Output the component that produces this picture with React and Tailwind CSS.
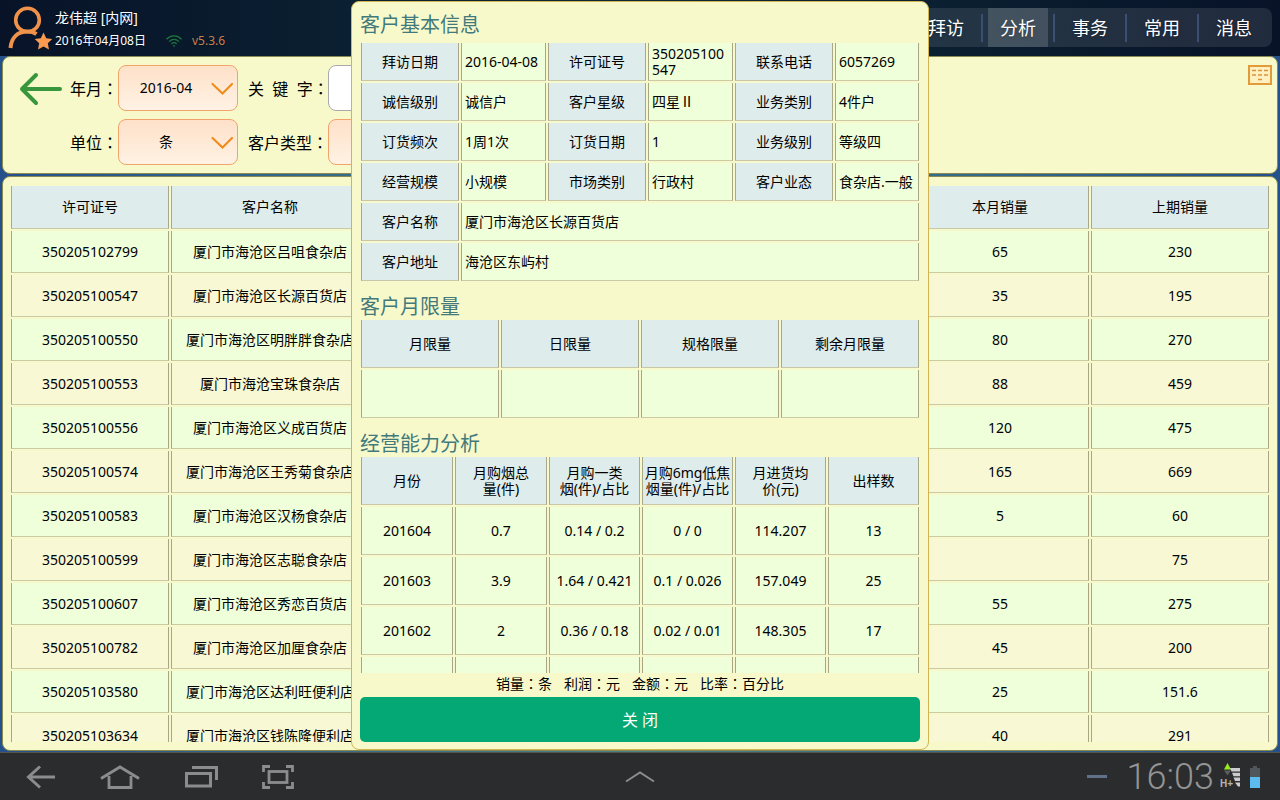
import { useState } from 'react';

const navItems = ['拜访', '分析', '事务', '常用', '消息'];

const customers = [
  { id: '350205102799', name: '厦门市海沧区吕咀食杂店', current: '65', last: '230' },
  { id: '350205100547', name: '厦门市海沧区长源百货店', current: '35', last: '195' },
  { id: '350205100550', name: '厦门市海沧区明胖胖食杂店', current: '80', last: '270' },
  { id: '350205100553', name: '厦门市海沧宝珠食杂店', current: '88', last: '459' },
  { id: '350205100556', name: '厦门市海沧区义成百货店', current: '120', last: '475' },
  { id: '350205100574', name: '厦门市海沧区王秀菊食杂店', current: '165', last: '669' },
  { id: '350205100583', name: '厦门市海沧区汉杨食杂店', current: '5', last: '60' },
  { id: '350205100599', name: '厦门市海沧区志聪食杂店', current: '', last: '75' },
  { id: '350205100607', name: '厦门市海沧区秀恋百货店', current: '55', last: '275' },
  { id: '350205100782', name: '厦门市海沧区加厘食杂店', current: '45', last: '200' },
  { id: '350205103580', name: '厦门市海沧区达利旺便利店', current: '25', last: '151.6' },
  { id: '350205103634', name: '厦门市海沧区钱陈隆便利店', current: '40', last: '291' },
];

const basicInfo = [
  ['拜访日期', '2016-04-08', '许可证号', '350205100547', '联系电话', '6057269'],
  ['诚信级别', '诚信户', '客户星级', '四星Ⅱ', '业务类别', '4件户'],
  ['订货频次', '1周1次', '订货日期', '1', '业务级别', '等级四'],
  ['经营规模', '小规模', '市场类别', '行政村', '客户业态', '食杂店.一般'],
];

const wideInfo = [
  ['客户名称', '厦门市海沧区长源百货店'],
  ['客户地址', '海沧区东屿村'],
];

const limitHeads = ['月限量', '日限量', '规格限量', '剩余月限量'];

const abilityHeads = ['月份', '月购烟总\n量(件)', '月购一类\n烟(件)/占比', '月购6mg低焦\n烟量(件)/占比', '月进货均\n价(元)', '出样数'];

const abilityRows = [
  ['201604', '0.7', '0.14 / 0.2', '0 / 0', '114.207', '13'],
  ['201603', '3.9', '1.64 / 0.421', '0.1 / 0.026', '157.049', '25'],
  ['201602', '2', '0.36 / 0.18', '0.02 / 0.01', '148.305', '17'],
  ['', '', '', '', '', ''],
];

const headCell = 'border-x border-b border-x-[#a8a88c] border-b-[#c8c8a8] bg-[#dfecec] p-0 font-normal';
const bodyCell = 'border-x border-b border-x-[#a8a684] border-b-[#cccaa4] p-0';

// full-width colon, centred in its box
function Colon() {
  return <span className="font-['Noto_Sans_CJK_TC',sans-serif]">：</span>;
}

function UserIcon() {
  return (
    <svg className="h-11 w-11" viewBox="0 0 44 44" fill="none">
      <circle cx="19.5" cy="14" r="11.8" stroke="#f0924a" strokeWidth="3.6" />
      <path d="M2.5 42C3.5 31 10 25.500 19.500 25.500C23 25.500 26 26.300 28.500 28" stroke="#f0924a" strokeWidth="4" />
      <path d="M35.500 26.500l2.700 5.700 6.100.8-4.500 4.300 1.200 6.200-5.500-3-5.500 3 1.200-6.200-4.500-4.300 6.100-.8z" fill="#fb9a50" />
    </svg>
  );
}

function WifiIcon() {
  return (
    <svg className="h-3 w-4" viewBox="0 0 16 12" fill="none" stroke="#1c7a3c" strokeWidth="1.200">
      <path d="M.5 4.200C5-.2 11-.2 15.500 4.200" />
      <path d="M3 6.600c3.200-2.900 6.800-2.900 10 0" />
      <path d="M5.300 8.800c1.800-1.500 3.600-1.500 5.400 0" />
      <circle cx="8" cy="10.800" r=".9" fill="#1c7a3c" stroke="none" />
    </svg>
  );
}

function Dropdown({ id, options }) {
  return (
    <div className="relative h-[46px] w-[120px]">
      <select
        id={id}
        className="h-full w-full appearance-none rounded-lg border border-[#f0a46c] bg-linear-to-b from-[#fee1c9] to-[#fff2e4] pr-6 text-sm text-black [text-align-last:center]"
      >
        {options.map((o) => <option key={o}>{o}</option>)}
      </select>
      <svg className="pointer-events-none absolute right-1 top-4 h-4 w-6" viewBox="0 0 24 16" fill="none">
        <path d="M2.500 3l10 9.500 9.500-9.500" stroke="#f08c1e" strokeWidth="2.200" strokeLinecap="round" />
      </svg>
    </div>
  );
}

function Header() {
  const [active, setActive] = useState('分析');

  return (
    <header className="flex h-14 shrink-0 items-center justify-between bg-linear-to-r from-[#081328] via-[#0c2a38] to-[#081328] px-2 text-white">
      <div className="flex items-center gap-[3px]">
        <UserIcon />
        <div className="pt-[3px] text-shadow-sm">
          <div className="h-[23px] text-sm leading-6">龙伟超 [内网]</div>
          <div className="flex items-center text-xs leading-6">
            <span className="w-[111px]">2016年04月08日</span>
            <WifiIcon />
            <span className="pl-[10px] text-[#c8804a]">v5.3.6</span>
          </div>
        </div>
      </div>
      <nav className="mb-px flex h-[39px] items-center rounded-lg bg-white/10 pr-2">
        {navItems.map((item, i) => (
          <div key={item} className="flex h-full items-center">
            {i > 0 && <span className="mx-[5px] h-7 w-[2px] bg-[#3a4f72]" />}
            <button
              onClick={() => setActive(item)}
              className={`h-full w-[60px] text-lg text-shadow-md ${active === item ? 'bg-white/15' : ''}`}
            >
              {item}
            </button>
          </div>
        ))}
      </nav>
    </header>
  );
}

function Filters() {
  return (
    <section className="flex h-[118px] shrink-0 items-start rounded-lg border border-[#8a8a50] bg-[#f8f9ca] pt-2 pr-[5px] pl-[15px]">
      <button aria-label="返回" className="mt-[7px]">
        <svg className="h-9 w-[52px]" viewBox="0 0 52 36" fill="none" stroke="#38963c" strokeWidth="4" strokeLinecap="round" strokeLinejoin="round">
          <path d="M42 17H4M18 3L4 17l14 14" />
        </svg>
      </button>
      <div className="grid grid-cols-[48px_130px_80px_120px] items-center gap-y-2 whitespace-nowrap">
        <label htmlFor="month">年月<Colon /></label>
        <Dropdown id="month" options={['2016-04', '2016-03', '2016-02']} />
        <label htmlFor="keyword">关&nbsp;&nbsp;键&nbsp;&nbsp;字<Colon /></label>
        <input id="keyword" className="h-[46px] rounded-lg border border-[#aaaaaa] bg-white px-2 text-sm" />
        <label htmlFor="unit">单位<Colon /></label>
        <Dropdown id="unit" options={['条', '件']} />
        <label htmlFor="type">客户类型<Colon /></label>
        <Dropdown id="type" options={['']} />
      </div>
      <button aria-label="键盘" className="ml-auto">
        <svg className="h-5 w-6" viewBox="0 0 24 20" fill="none">
          <rect x="1" y="1" width="22" height="18" fill="#fff0c0" stroke="#e39a38" strokeWidth="2" />
          <path d="M4 5.500h4m2 0h4m2 0h4M4 10h4m2 0h4m2 0h4M10 14.500h4" stroke="#dc9440" strokeWidth="1.500" />
        </svg>
      </button>
    </section>
  );
}

function CustomerTable() {
  return (
    <section className="flex min-h-0 flex-1 flex-col rounded-lg border border-[#8a8a50] bg-[#f8f9ca] px-[6px] pt-[7px] pb-2">
      <div className="min-h-0 flex-1 overflow-hidden">
        <table className="w-full table-fixed border-separate border-spacing-[2px] text-center text-sm">
          <colgroup>
            <col className="w-[158px]" />
            <col className="w-[198px]" />
            <col />
            <col className="w-[178px]" />
            <col className="w-[178px]" />
          </colgroup>
          <thead>
            <tr className="h-[43px]">
              <th className={headCell}>许可证号</th>
              <th className={headCell}>客户名称</th>
              <th className={headCell}></th>
              <th className={headCell}>本月销量</th>
              <th className={headCell}>上期销量</th>
            </tr>
          </thead>
          <tbody>
            {customers.map((c) => (
              <tr key={c.id} className="h-[42px] whitespace-nowrap odd:bg-[#efffda] even:bg-[#f9f8d4]">
                <td className={bodyCell}>{c.id}</td>
                <td className={bodyCell}>{c.name}</td>
                <td className={bodyCell}></td>
                <td className={bodyCell}>{c.current}</td>
                <td className={bodyCell}>{c.last}</td>
              </tr>
            ))}
          </tbody>
        </table>
      </div>
    </section>
  );
}

function DetailDialog({ onClose }) {
  const table = 'w-full table-fixed border-separate border-spacing-[2px] text-sm leading-4';
  const heading = 'text-xl leading-6 text-[#427a7c]';

  return (
    <div
      role="dialog"
      aria-label="客户基本信息"
      className="absolute inset-x-0 top-px bottom-[50px] mx-auto flex w-[578px] flex-col rounded-lg border border-[#d2b450] bg-[#f8f9ca] px-[7px] pb-[7px]"
    >
      <div className="min-h-0 flex-1 overflow-hidden">
        <h2 className={`${heading} px-px pt-[11px] pb-1`}>客户基本信息</h2>
        <table className={table}>
          <colgroup>
            <col className="w-[98px]" />
            <col className="w-[85px]" />
            <col className="w-[98px]" />
            <col className="w-[85px]" />
            <col className="w-[98px]" />
            <col />
          </colgroup>
          <tbody>
            {basicInfo.map((row) => (
              <tr key={row[0]} className="h-[38px]">
                {row.map((text, i) =>
                  i % 2 === 0 ? (
                    <th key={i} className={headCell}>{text}</th>
                  ) : (
                    <td key={i} className={`${bodyCell} bg-[#efffda] break-all`}>
                      <div className="px-[3px]">{text}</div>
                    </td>
                  )
                )}
              </tr>
            ))}
            {wideInfo.map(([label, text]) => (
              <tr key={label} className="h-[38px]">
                <th className={headCell}>{label}</th>
                <td colSpan={5} className={`${bodyCell} bg-[#efffda]`}>
                  <div className="px-[3px]">{text}</div>
                </td>
              </tr>
            ))}
          </tbody>
        </table>

        <h2 className={`${heading} -mb-px px-px pt-3`}>客户月限量</h2>
        <table className={table}>
          <thead>
            <tr className="h-12">
              {limitHeads.map((h) => <th key={h} className={headCell}>{h}</th>)}
            </tr>
          </thead>
          <tbody>
            <tr className="h-12">
              {limitHeads.map((h) => <td key={h} className={`${bodyCell} bg-[#efffda]`}></td>)}
            </tr>
          </tbody>
        </table>

        <h2 className={`${heading} -mb-px px-px pt-3`}>经营能力分析</h2>
        <table className={`${table} text-center`}>
          <colgroup>
            <col className="w-[92px]" />
            <col className="w-[92px]" />
            <col span={4} />
          </colgroup>
          <thead>
            <tr className="h-12">
              {abilityHeads.map((h) => <th key={h} className={`${headCell} whitespace-pre`}>{h}</th>)}
            </tr>
          </thead>
          <tbody>
            {abilityRows.map((row, r) => (
              <tr key={r} className="h-12">
                {row.map((text, i) => <td key={i} className={`${bodyCell} bg-[#efffda]`}>{text}</td>)}
              </tr>
            ))}
          </tbody>
        </table>
      </div>
      <div className="flex h-6 shrink-0 justify-center gap-3 text-sm leading-5">
        <span>销量<Colon />条</span>
        <span>利润<Colon />元</span>
        <span>金额<Colon />元</span>
        <span>比率<Colon />百分比</span>
      </div>
      <button onClick={onClose} className="mx-px h-[45px] shrink-0 rounded-[5px] bg-[#04a874] text-base text-white">
        关 闭
      </button>
    </div>
  );
}

function SystemBar() {
  return (
    <footer className="relative flex h-12 shrink-0 items-center justify-between border-t border-[#55564c] bg-[#2b2c2e] pr-5 pl-6">
      <div className="flex items-center gap-11">
        <button aria-label="后退">
          <svg className="h-7 w-8" viewBox="0 0 32 28" fill="none" stroke="#8c8c8c" strokeWidth="3">
            <path d="M31 14H5M16 3.500L4.500 14 16 24.500" />
          </svg>
        </button>
        <button aria-label="主页">
          <svg className="h-7 w-10" viewBox="0 0 40 28" fill="none" stroke="#8c8c8c" strokeWidth="2.800">
            <path d="M1 15.500L20 4l19 11.500M9 13v11.500h22V13" />
          </svg>
        </button>
        <button aria-label="最近任务">
          <svg className="h-7 w-[34px]" viewBox="0 0 34 28" fill="none" stroke="#8c8c8c" strokeWidth="3">
            <rect x="2.500" y="10.500" width="24" height="12.500" />
            <path d="M8 4.500h24.500V17" />
          </svg>
        </button>
        <button aria-label="截屏">
          <svg className="h-7 w-8" viewBox="0 0 32 28" fill="none" stroke="#8c8c8c" strokeWidth="2.800">
            <rect x="7" y="8.500" width="18" height="11" />
            <path d="M1.500 9V3.500H8M24 3.500h6.500V9M1.500 19v5.500H8M24 24.500h6.500V19" />
          </svg>
        </button>
      </div>
      <button aria-label="展开" className="absolute left-1/2 -translate-x-1/2">
        <svg className="h-4 w-8" viewBox="0 0 32 16" fill="none" stroke="#8c8c8c" strokeWidth="2">
          <path d="M2 12.500L16 3.500l14 9" />
        </svg>
      </button>
      <div className="flex items-center">
        <span className="mr-5 h-[3px] w-5 bg-[#5f7088]" />
        <span className="font-['Roboto',sans-serif] text-4xl font-light text-[#949494]">16:03</span>
        <svg className="ml-1 h-7 w-6" viewBox="0 0 24 28">
          <path d="M9.500 0l3.500 6.500H6z" fill="#98ec1c" />
          <path d="M9.500 12.500l3.500-5H6z" fill="#5c5c5c" />
          <path d="M12 5h10v3.500h-8.500zM14 9.800h8v3.500h-6.500zM15.500 14.600H22v3.500h-5zM17 19.400h5v4.200h-2z" fill="#cccccc" />
          <text x="2" y="23.500" fontSize="10" fontWeight="bold" fontFamily="Liberation Sans" fill="#b4b4b4">H+</text>
        </svg>
        <svg className="ml-2 h-6 w-[10px]" viewBox="0 0 10 24">
          <path d="M3 1h4v2h3v20H0V3h3z" fill="#50565c" />
          <rect y="12" width="10" height="11" fill="#5cbcf0" />
        </svg>
      </div>
    </footer>
  );
}

export default function App() {
  const [open, setOpen] = useState(true);

  return (
    <div className="relative flex h-screen flex-col overflow-hidden bg-[#111a20] font-['Noto_Sans','Noto_Sans_CJK_SC',sans-serif] text-black">
      <Header />
      <main className="flex min-h-0 flex-1 flex-col gap-[2px] bg-linear-to-r from-[#24508c] via-[#4a8484] to-[#24508c] px-[2px] pb-px">
        <Filters />
        <CustomerTable />
      </main>
      <SystemBar />
      {open && <DetailDialog onClose={() => setOpen(false)} />}
    </div>
  );
}
